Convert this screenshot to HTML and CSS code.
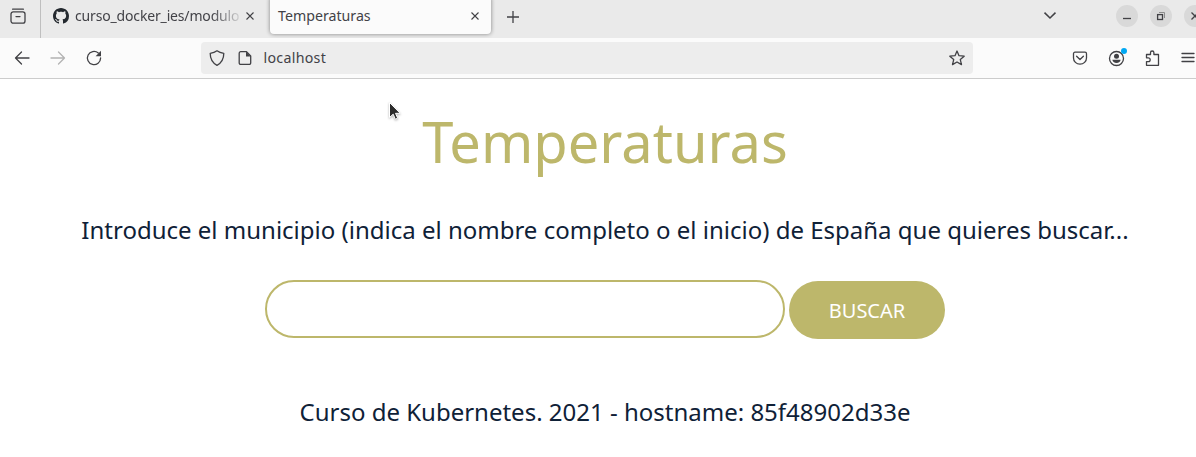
FILE: index.html
```html
<!DOCTYPE html>
<html lang="es">
<head>
<meta charset="utf-8">
<title>Temperaturas</title>
<link rel="stylesheet" href="styles.css">
</head>
<body>
<div class="window">
  <header class="tabstrip">
    <div class="view">
      <svg class="icon" viewBox="0 0 16 16"><path d="M2.6 1.2h10.8" /><rect x="1" y="3.9" width="14" height="11.2" rx="2.2"/><path d="M6 8.6h4"/></svg>
    </div>
    <div class="tab">
      <svg class="github" viewBox="0 0 16 16"><path d="M8 0C3.58 0 0 3.58 0 8c0 3.54 2.29 6.53 5.47 7.59.4.07.55-.17.55-.38 0-.19-.01-.82-.01-1.49-2.01.37-2.53-.49-2.69-.94-.09-.23-.48-.94-.82-1.13-.28-.15-.68-.52-.01-.53.63-.01 1.08.58 1.23.82.72 1.21 1.87.87 2.33.66.07-.52.28-.87.51-1.07-1.78-.2-3.64-.89-3.64-3.95 0-.87.31-1.59.82-2.15-.08-.2-.36-1.02.08-2.12 0 0 .67-.21 2.2.82.64-.18 1.32-.27 2-.27s1.36.09 2 .27c1.53-1.04 2.2-.82 2.2-.82.44 1.1.16 1.92.08 2.12.51.56.82 1.27.82 2.15 0 3.07-1.87 3.75-3.65 3.95.29.25.54.73.54 1.48 0 1.07-.01 1.93-.01 2.2 0 .21.15.46.55.38A8.01 8.01 0 0 0 16 8c0-4.42-3.58-8-8-8z"/></svg>
      <span class="tab-title faded">curso_docker_ies/modulo</span>
      <svg class="close" viewBox="0 0 8 8"><path d="M.5.5l7 7m0-7l-7 7"/></svg>
    </div>
    <div class="tab active">
      <span class="tab-title">Temperaturas</span>
      <svg class="close" viewBox="0 0 8 8"><path d="M.5.5l7 7m0-7l-7 7"/></svg>
    </div>
    <svg class="plus" viewBox="0 0 12 12"><path d="M6 0v12M0 6h12"/></svg>
    <svg class="chevron" viewBox="0 0 12 7"><path d="M.5.6L6 6 11.500.6"/></svg>
    <div class="controls">
      <span class="control"><svg viewBox="0 0 22 22"><path d="M7 13.500h8"/></svg></span>
      <span class="control"><svg viewBox="0 0 22 22"><rect x="7.600" y="9.600" width="4.900" height="4.900"/><path class="back" d="M9 7.500h5.500V13"/></svg></span>
      <span class="control"><svg viewBox="0 0 22 22"><path d="M7.500 7.500l7 7m0-7l-7 7"/></svg></span>
    </div>
  </header>
  <nav class="toolbar">
    <div class="history">
      <svg class="icon" viewBox="0 0 16 16"><path d="M15 8H1.500M7.500 2L1.500 8l6 6"/></svg>
      <svg class="icon disabled" viewBox="0 0 16 16"><path d="M1 8h13.500M8.500 2l6 6-6 6"/></svg>
      <svg class="icon" viewBox="0 0 16 16"><path d="M14.600 8A6.600 6.600 0 1 1 12.300 3"/><path class="solid" d="M15 .8v5.400H9.600z"/></svg>
    </div>
    <div class="address">
      <svg class="icon" viewBox="0 0 16 16"><path d="M8 .8c2 1.500 4.300 2.200 6.800 2.500C14.800 9 12.500 13 8 15.300 3.500 13 1.200 9 1.200 3.300 3.700 3 6 2.300 8 .8z"/></svg>
      <svg class="icon page-icon" viewBox="0 0 16 16"><path d="M3.700 1.700h5.800l4.200 4.200v7a1.500 1.500 0 0 1-1.500 1.500H3.700a1.500 1.500 0 0 1-1.500-1.500V3.200a1.500 1.500 0 0 1 1.500-1.500z"/><path class="solid" d="M9 1.500v4.900h4.800z"/></svg>
      <span class="url">localhost</span>
      <svg class="icon star" viewBox="0 0 16 16"><path d="M8 1l2 4.700 5.200.5-3.900 3.400 1.200 5L8 12l-4.500 2.600 1.200-5L.8 6.200 6 5.700z"/></svg>
    </div>
    <div class="actions">
      <svg class="icon" viewBox="0 0 16 16"><path d="M3 2.200h10a1.500 1.500 0 0 1 1.500 1.500V8a6.500 6.200 0 0 1-13 0V3.700A1.500 1.500 0 0 1 3 2.200zM4.600 6.200L8 9.500l3.400-3.300"/></svg>
      <span class="account">
        <svg class="icon" viewBox="0 0 16 16"><circle cx="8.500" cy="8.500" r="7"/><circle class="solid" cx="8.500" cy="6.300" r="2.500"/><path class="solid" d="M4.400 9.800h8.200c0 2-1.900 3.200-4.100 3.200s-4.100-1.200-4.100-3.200z"/></svg>
        <i class="badge"></i>
      </span>
      <svg class="icon" viewBox="0 0 16 16"><path d="M2.500 15.300V11.600h1.800a1.900 1.900 0 0 0 0-3.800H2.500V4.500h4V2.700a1.700 1.700 0 0 1 3.400 0v1.800h4.600v10.800z"/></svg>
      <svg class="icon" viewBox="0 0 16 16"><path d="M2 3.500h12M2 7.500h12M2 11.500h12"/></svg>
    </div>
  </nav>
  <main class="page">
    <h1 class="title">Temperaturas</h1>
    <p class="text">Introduce el municipio (indica el nombre completo o el inicio) de España que quieres buscar...</p>
    <form class="search">
      <input class="field" type="text" aria-label="Municipio">
      <button class="submit" type="button">BUSCAR</button>
    </form>
    <p class="text">Curso de Kubernetes. 2021 - hostname: 85f48902d33e</p>
  </main>
  <svg class="pointer" viewBox="0 0 14 20"><path d="M1.500 1.500v15l3.700-3.300 2.100 5 2.400-1-2.200-4.900h4.700z"/></svg>
</div>
</body>
</html>
```
FILE: styles.css
```css
* { box-sizing: border-box; }
body { margin: 0; overflow: hidden; background: #fff; font-family: "Noto Sans", sans-serif; }
svg { display: block; flex: none; fill: none; stroke: #414145; stroke-width: 1.3; overflow: visible; }
.window { position: relative; width: 1210px; height: 457px; }
.icon { width: 16px; height: 16px; stroke-linejoin: round; stroke-linecap: round; }
.solid { fill: #414145; stroke: none; }
.disabled { stroke: #b3b3b3; }

.tabstrip { display: flex; height: 38px; background: #eaeaea; overflow: hidden; }
.view { width: 41px; height: 38px; padding: 8px 0 0 10px; border-right: 1px solid #bfbfbf; }
.tab { display: flex; align-items: center; width: 221px; height: 32px; padding-left: 12px; }
.github { width: 16px; height: 16px; margin-right: 6px; fill: #24292f; stroke: none; }
.tab-title { font-size: 14.2px; line-height: 20px; color: #424247; white-space: nowrap; }
.faded { width: 167px; font-size: 14px; letter-spacing: -.16px; -webkit-mask-image: linear-gradient(to right, #000 136px, transparent 169px); mask-image: linear-gradient(to right, #000 136px, transparent 169px); }
.close { width: 8px; height: 8px; margin-left: 4px; stroke-width: 1.1; }
.active { width: 221px; height: 38px; margin: -4px 0 0 8px; padding: 2px 12px 0 8px; background: #fbfbfb; border-radius: 4px; box-shadow: 0 0 4px rgba(0,0,0,.45); }
.active .close { margin-left: auto; }
.plus { width: 12px; height: 12px; margin: 10.500px 0 0 15.500px; }
.chevron { width: 12px; height: 7px; margin: 12px 0 0 525.500px; stroke-width: 1.5; }
.controls { display: flex; gap: 12px; margin: 5px 0 0 60px; }
.control { width: 22px; height: 22px; border-radius: 50%; background: #d9d9d9; }
.control .back { stroke: #8c8c8c; stroke-width: 1; }

.toolbar { display: flex; align-items: center; height: 41px; background: #fbfbfb; border-bottom: 1px solid #ccc; }
.history { display: flex; gap: 20px; width: 201px; padding-left: 14px; }
.address { display: flex; align-items: center; width: 772px; height: 32px; padding: 0 8px; background: #ededed; border-radius: 4px; }
.page-icon { margin-left: 12px; }
.url { margin-left: 10.500px; font-size: 14.2px; letter-spacing: .3px; line-height: 20px; color: #424247; }
.star { margin-left: auto; }
.actions { display: flex; gap: 20px; margin-left: 99px; }
.account { position: relative; }
.badge { position: absolute; top: -2px; right: -3px; width: 6px; height: 6px; border-radius: 50%; background: #00a8f3; }

.page { display: flex; flex-direction: column; align-items: center; padding-top: 26px; color: #0f2137; }
.title { margin: 0; font-size: 56px; line-height: 72px; font-weight: 400; color: #bdb76b; }
.text { margin: 0; font-size: 24px; line-height: 36px; white-space: nowrap; }
.title + .text { margin-top: 35px; }
.search { display: flex; gap: 4px; margin: 32px 0 55px; }
.field { width: 520px; height: 58px; padding: 0 24px; border: 2px solid #bdb76b; border-radius: 29px; background: #fff; font: 20px "Noto Sans", sans-serif; outline: 0; }
.submit { width: 156px; height: 58px; margin-top: 1px; padding: 0; border: 0; border-radius: 29px; background: #bdb76b; color: #fff; font: 20px "Noto Sans", sans-serif; }
.pointer { position: absolute; top: 101px; left: 388px; width: 14px; height: 20px; filter: drop-shadow(0 1px 1px rgba(0,0,0,.3)); }
.pointer path { fill: #2b2b2b; stroke: #fff; stroke-width: 1; }
```
